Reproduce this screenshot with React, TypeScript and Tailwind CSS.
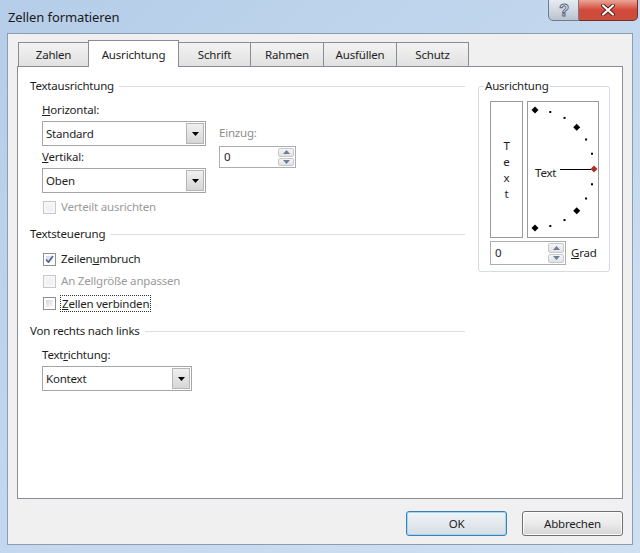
import React from 'react';

const Combo = ({ value, width }: { value: string; width: string }) => {
  return (
    <div className={`flex h-[25px] ${width} border border-[#a5a5a5] bg-white`}>
      <div className="flex flex-1 items-center pl-[3px]">{value}</div>
      <div className="m-px flex w-[18px] items-center justify-center border border-[#b5b5b5] bg-gradient-to-b from-[#f0f0f0] to-[#d6d6d6]">
        <svg width="7" height="4" viewBox="0 0 7 4">
          <path d="M0 0h7L3.5 4z" fill="#000" />
        </svg>
      </div>
    </div>
  );
};

const Spin = ({ width, height }: { width: string; height: string }) => {
  return (
    <div className={`flex ${height} ${width} border border-[#abadb3] bg-white`}>
      <div className="flex flex-1 items-center pl-[4px]">0</div>
      <div className="flex w-[18px] flex-col gap-px p-px">
        <div className="flex flex-1 items-center justify-center rounded-[2px] border border-[#c9c9c9] bg-gradient-to-b from-[#f5f5f5] to-[#e2e2e2]">
          <svg width="7" height="4" viewBox="0 0 7 4">
            <path d="M3.5 0L7 4H0z" fill="#6a7f9b" />
          </svg>
        </div>
        <div className="flex flex-1 items-center justify-center rounded-[2px] border border-[#c9c9c9] bg-gradient-to-b from-[#f5f5f5] to-[#e2e2e2]">
          <svg width="7" height="4" viewBox="0 0 7 4">
            <path d="M0 0h7L3.5 4z" fill="#6a7f9b" />
          </svg>
        </div>
      </div>
    </div>
  );
};

const Check = ({ checked, disabled }: { checked?: boolean; disabled?: boolean }) => {
  return (
    <div
      className={`flex h-[13px] w-[13px] shrink-0 items-center justify-center border p-[2px] ${
        disabled ? 'border-[#c8c8c8] bg-[#f7f7f7]' : 'border-[#8e8f8f] bg-white'
      }`}
    >
      <div
        className={`relative h-full w-full ${
          disabled ? 'bg-[#f2f2f2]' : 'bg-gradient-to-br from-[#d6d6d6] to-[#fafafa]'
        }`}
      >
        {checked && (
          <svg className="absolute left-[-1px] top-[-1px]" width="9" height="9" viewBox="0 0 9 9">
            <path d="M1 4.5L3.5 7L8 1" fill="none" stroke="#4a5f97" strokeWidth="1.6" />
          </svg>
        )}
      </div>
    </div>
  );
};

const GroupTitle = ({ title }: { title: string }) => {
  return (
    <div className="flex h-[16px] items-center">
      <span className="leading-[16px]">{title}</span>
      <div className="ml-[5px] h-px flex-1 bg-[#dddddd]" />
    </div>
  );
};

const Tab = ({ label, width, active }: { label: string; width: string; active?: boolean }) => {
  if (active) {
    return (
      <div
        className={`relative z-10 -mb-px -ml-px flex h-[27px] ${width} items-start justify-center border border-b-0 border-[#898c95] bg-white pt-[5px]`}
      >
        {label}
      </div>
    );
  }
  return (
    <div
      className={`-ml-px flex h-[24px] ${width} items-center justify-center border border-b-0 border-[#898c95] bg-gradient-to-b from-[#f3f3f3] to-[#e1e1e1]`}
    >
      {label}
    </div>
  );
};

const marks = [90, 75, 60, 45, 30, 15, 0, -15, -30, -45, -60, -75, -90].map((a) => {
  const r = (a * Math.PI) / 180;
  return { a, x: 7 + 59 * Math.cos(r), y: 67 - 59 * Math.sin(r) };
});

const Dial = () => {
  return (
    <svg width="70" height="135" viewBox="0 0 70 135">
      {marks.map((m) => {
        if (m.a === 0) {
          return (
            <path
              key={m.a}
              d={`M${m.x} ${m.y - 3.5}L${m.x + 3.5} ${m.y}L${m.x} ${m.y + 3.5}L${m.x - 3.5} ${m.y}z`}
              fill="#b0302a"
            />
          );
        }
        if (Math.abs(m.a) % 45 === 0) {
          return (
            <path
              key={m.a}
              d={`M${m.x} ${m.y - 3.5}L${m.x + 3.5} ${m.y}L${m.x} ${m.y + 3.5}L${m.x - 3.5} ${m.y}z`}
              fill="#000"
            />
          );
        }
        return <rect key={m.a} x={m.x - 1} y={m.y - 1} width="2" height="2" fill="#000" />;
      })}
      <line x1="32" y1="67.5" x2="63" y2="67.5" stroke="#000" strokeWidth="1" />
      <text x="7" y="75" fontSize="11.5" letterSpacing="-0.2" fill="#1e1e1e" fontFamily="Noto Sans, sans-serif">
        Text
      </text>
    </svg>
  );
};

const App = () => {
  return (
    <div className="flex h-[553px] w-[640px] flex-col overflow-hidden bg-gradient-to-br from-[#b5cde8] via-[#c3d8ee] to-[#cfe0f2] font-['Noto_Sans',sans-serif] text-[11.5px] tracking-[-0.2px] text-[#1e1e1e]">
      {/* Titelleiste */}
      <div className="flex h-[33px] shrink-0 items-start">
        <span className="pl-[8px] pt-[7px] text-[13px] leading-[20px] tracking-[-0.1px] text-[#1a1a1a]">
          Zellen formatieren
        </span>
        <div className="ml-auto mr-[2px] -mt-px flex">
          <div className="flex h-[22px] w-[31px] items-center justify-center rounded-bl-[5px] border border-[#6f7d8e] bg-gradient-to-b from-[#e6ebf1] via-[#d0d8e2] to-[#b8c3cf]">
            <svg width="14" height="16" viewBox="0 0 14 16">
              <text
                x="7"
                y="14"
                textAnchor="middle"
                fontSize="16"
                fontWeight="bold"
                fontFamily="Liberation Sans, sans-serif"
                fill="#f4f6f8"
                stroke="#56667a"
                strokeWidth="1"
              >
                ?
              </text>
            </svg>
          </div>
          <div className="flex h-[22px] w-[59px] items-center justify-center rounded-br-[5px] border border-l-0 border-[#7a2a22] bg-gradient-to-b from-[#e8a597] via-[#d2473a] to-[#c8503c]">
            <svg width="14" height="12" viewBox="0 0 14 12">
              <path d="M2 1.5L12 10.5M12 1.5L2 10.5" stroke="#5a1c16" strokeWidth="4" strokeLinecap="round" />
              <path d="M2 1.5L12 10.5M12 1.5L2 10.5" stroke="#fff" strokeWidth="2.2" strokeLinecap="round" />
            </svg>
          </div>
        </div>
      </div>

      {/* Client-Bereich */}
      <div className="mx-[7px] mb-[8px] flex flex-1 flex-col border border-[#8c9db3] bg-[#f0f0f0] pl-[9px] pt-[6px]">
        <div className="flex h-[26px] items-end pl-[2px]">
          <Tab label="Zahlen" width="w-[71px]" />
          <Tab label="Ausrichtung" width="w-[91px]" active />
          <Tab label="Schrift" width="w-[73px]" />
          <Tab label="Rahmen" width="w-[74px]" />
          <Tab label="Ausfüllen" width="w-[74px]" />
          <Tab label="Schutz" width="w-[73px]" />
        </div>

        <div className="flex h-[433px] w-[606px] border border-[#898c95] bg-white pl-[12px] pt-[11px]">
          {/* linke Spalte */}
          <div className="flex w-[435px] flex-col">
            <GroupTitle title="Textausrichtung" />
            <div className="mt-[8px] flex pl-[12px]">
              <div className="flex w-[164px] flex-col">
                <span className="leading-[16px]">
                  <u>H</u>orizontal:
                </span>
                <div className="mt-[3px]">
                  <Combo value="Standard" width="w-[164px]" />
                </div>
                <span className="mt-[3px] leading-[16px]">
                  <u>V</u>ertikal:
                </span>
                <div className="mt-[3px]">
                  <Combo value="Oben" width="w-[164px]" />
                </div>
              </div>
              <div className="ml-[13px] flex flex-col pt-[23px]">
                <span className="leading-[16px] text-[#8d8d8d]">Einzug:</span>
                <div className="mt-[5px]">
                  <Spin width="w-[77px]" height="h-[22px]" />
                </div>
              </div>
            </div>
            <div className="mt-[6px] flex h-[16px] items-center gap-[5px] pl-[13px] text-[#9a9a9a]">
              <Check disabled />
              <span>Verteilt ausrichten</span>
            </div>

            <div className="mt-[11px]">
              <GroupTitle title="Textsteuerung" />
            </div>
            <div className="mt-[6px] flex flex-col pl-[13px]">
              <div className="flex h-[22px] items-center gap-[5px]">
                <Check checked />
                <span>
                  Zeilen<u>u</u>mbruch
                </span>
              </div>
              <div className="flex h-[22px] items-center gap-[5px] text-[#9a9a9a]">
                <Check disabled />
                <span>An Zellgröße anpassen</span>
              </div>
              <div className="flex h-[22px] items-center gap-[4px]">
                <Check />
                <span className="border border-dotted border-[#333] px-px leading-[15px]">
                  <u>Z</u>ellen verbinden
                </span>
              </div>
            </div>

            <div className="mt-[9px]">
              <GroupTitle title="Von rechts nach links" />
            </div>
            <span className="mt-[8px] pl-[12px] leading-[16px]">
              Text<u>r</u>ichtung:
            </span>
            <div className="mt-[3px] pl-[12px]">
              <Combo value="Kontext" width="w-[150px]" />
            </div>
          </div>

          {/* rechte Spalte */}
          <fieldset className="ml-[13px] h-[194px] w-[132px] rounded-[3px] border border-[#d5dbe1]">
            <legend className="ml-[5px] px-px leading-[16px]">Ausrichtung</legend>
            <div className="mt-[7px] flex h-[137px] gap-[4px] pl-[11px]">
              <div className="flex w-[33px] flex-col items-center justify-center border border-[#9a9a9a] leading-[16px]">
                <span>T</span>
                <span>e</span>
                <span>x</span>
                <span>t</span>
              </div>
              <div className="w-[72px] border border-[#9a9a9a]">
                <Dial />
              </div>
            </div>
            <div className="mt-[3px] flex items-center pl-[11px]">
              <Spin width="w-[76px]" height="h-[24px]" />
              <span className="ml-[5px]">
                <u>G</u>rad
              </span>
            </div>
          </fieldset>
        </div>

        <div className="mt-[12px] flex w-[606px] justify-end gap-[15px]">
          <button className="h-[25px] w-[101px] rounded-[3px] border border-[#3c7fb1] bg-gradient-to-b from-[#f0f4f7] to-[#d6dde3] shadow-[inset_0_0_0_1px_#9fd9f5]">
            OK
          </button>
          <button className="h-[25px] w-[101px] rounded-[3px] border border-[#707070] bg-gradient-to-b from-[#f4f4f4] via-[#ebebeb] to-[#d4d4d4] shadow-[inset_0_0_0_1px_#fcfcfc]">
            Abbrechen
          </button>
        </div>
      </div>
    </div>
  );
};

export default App;
